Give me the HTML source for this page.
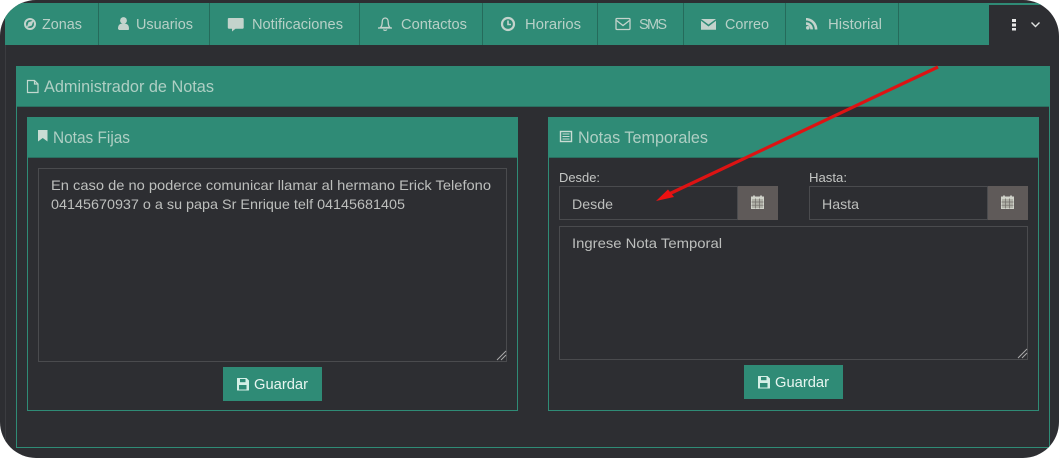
<!DOCTYPE html>
<html><head><meta charset="utf-8"><style>
html,body{margin:0;padding:0;background:#fff;width:1059px;height:458px;overflow:hidden}
svg{display:block}
text{font-family:"Liberation Sans",sans-serif}
.n{font-size:14.5px;fill:#b7d0c7}
.h{font-size:16.5px;fill:#afcfc4}
.l{font-size:13px;fill:#c4c6c4}
.t{font-size:14px;fill:#bdbfbd}
.g{font-size:14.5px;fill:#e8f5f0}
</style></head><body>
<svg width="1059" height="458" viewBox="0 0 1059 458" xmlns="http://www.w3.org/2000/svg">
<defs><clipPath id="c"><rect width="1059" height="458" rx="36" ry="36"/></clipPath></defs>
<rect width="1059" height="458" fill="#fff"/>
<g clip-path="url(#c)">
<rect width="1059" height="458" fill="#2d2e32"/>
<rect x="5" y="3" width="1054" height="2" fill="#2f8b76"/>
<rect x="5" y="3" width="984" height="42" fill="#2f8b76"/>
<rect x="5" y="45" width="1" height="413" fill="#3b3c40"/>
<g fill="#256b5b">
<rect x="98" y="3" width="1" height="42"/><rect x="209" y="3" width="1" height="42"/><rect x="359" y="3" width="1" height="42"/><rect x="482" y="3" width="1" height="42"/><rect x="597" y="3" width="1" height="42"/><rect x="683" y="3" width="1" height="42"/><rect x="785" y="3" width="1" height="42"/><rect x="898" y="3" width="1" height="42"/>
</g>
<!-- nav text -->
<text class="n" x="42" y="29" textLength="40" lengthAdjust="spacingAndGlyphs">Zonas</text>
<text class="n" x="136" y="29" textLength="57" lengthAdjust="spacingAndGlyphs">Usuarios</text>
<text class="n" x="252" y="29" textLength="91" lengthAdjust="spacingAndGlyphs">Notificaciones</text>
<text class="n" x="401" y="29" textLength="66" lengthAdjust="spacingAndGlyphs">Contactos</text>
<text class="n" x="525" y="29" textLength="56" lengthAdjust="spacingAndGlyphs">Horarios</text>
<text class="n" x="639" y="29" style="font-size:14.5px" textLength="28" lengthAdjust="spacing">SMS</text>
<text class="n" x="725" y="29" textLength="44" lengthAdjust="spacingAndGlyphs">Correo</text>
<text class="n" x="828" y="29" textLength="54" lengthAdjust="spacingAndGlyphs">Historial</text>
<!-- nav icons -->
<g fill="#c3d3cc" stroke="none">
<circle cx="30" cy="24" r="5" fill="none" stroke="#c3d3cc" stroke-width="2"/><path d="M33.500 20.500l-5 1.800-1.700 5 5-1.800z"/>
<circle cx="123.500" cy="20.500" r="3.400"/><path d="M118 29c0-4 1.500-5.500 5.500-5.500s5.500 1.500 5.500 5.500c0 .8-.6 1-1 1h-9c-.4 0-.5-.3-.5-1z"/>
<path d="M229 18h13.500c.8 0 1.200.4 1.200 1.200v8.300c0 .8-.4 1.200-1.200 1.200h-7l-3.500 2.800v-2.800h-3c-.8 0-1.200-.4-1.200-1.200v-8.300c0-.8.400-1.200 1.200-1.200z"/>
<path d="M701 19h15l-7.500 5.500z M701 20.800v9h15v-9l-7.500 5.700z"/>
<path d="M806 22.200v2.700c2.500 0 4.300 1.800 4.300 4.500h2.700c0-4-3-7.200-7-7.200z M806 18v2.500c5 0 8.800 4 8.800 9h2.600c0-6.500-5-11.500-11.400-11.500z"/><circle cx="807.800" cy="27.800" r="1.800"/>
</g>
<g fill="none" stroke="#c3d3cc">
<path d="M380.500 27.500c1.500-1.500 1.700-3 1.700-5.500 0-2.500 1.300-4 3-4s3 1.500 3 4c0 2.500.2 4 1.700 5.500z" stroke-width="1.300"/><path d="M378 28h14" stroke-width="1.300"/><path d="M383.500 29.500c.5 1.200 2.800 1.200 3.400 0" stroke-width="1.200"/>
<circle cx="508" cy="24" r="6" stroke-width="2.200"/><path d="M508 20.500v4h3" stroke-width="1.600"/>
<rect x="616" y="18.500" width="14" height="11" rx="1" stroke-width="1.300"/><path d="M616.500 20.500l6.500 5 6.500-5" stroke-width="1.300"/>
</g>
<!-- right nav -->
<g fill="#e8e8e8"><rect x="1012" y="19" width="4" height="3"/><rect x="1012" y="23.500" width="4" height="3"/><rect x="1012" y="28" width="4" height="2.500"/></g>
<path d="M1031.500 22.500l4 4 4-4" fill="none" stroke="#dfe1e0" stroke-width="1.400"/>
<!-- main panel -->
<rect x="16.500" y="66.500" width="1033" height="381" fill="none" stroke="#2f8b76"/>
<rect x="16" y="66" width="1034" height="40" fill="#2f8b76"/>
<rect x="17" y="106" width="1032" height="1" fill="#2a6f60"/>
<text class="h" x="44" y="92" textLength="170" lengthAdjust="spacingAndGlyphs">Administrador de Notas</text>
<path d="M27.500 80.500h7l3.500 3.500v8.500h-10.500z M34.500 80.500v3.500h3.500" fill="none" stroke="#c3d9d0" stroke-width="1.200"/>
<!-- left sub panel -->
<rect x="27.500" y="117.500" width="490" height="293" fill="none" stroke="#2f8b76"/>
<rect x="27" y="117" width="491" height="40" fill="#2f8b76"/>
<rect x="28" y="157" width="489" height="1" fill="#2a6f60"/>
<text class="h" x="53" y="143" textLength="77" lengthAdjust="spacingAndGlyphs">Notas Fijas</text>
<path d="M38 130h9.500v11.500l-4.750-3.500-4.750 3.500z" fill="#c9dcd4"/>
<rect x="38.500" y="168.500" width="468" height="193" fill="none" stroke="#4a4b4e"/>
<text class="t" x="51" y="190" textLength="440" lengthAdjust="spacingAndGlyphs">En caso de no poderce comunicar llamar al hermano Erick Telefono</text>
<text class="t" x="51" y="209" textLength="354" lengthAdjust="spacingAndGlyphs">04145670937 o a su papa Sr Enrique telf 04145681405</text>
<path d="M497 360l9-9M501 360l5-5" stroke="#aaa" stroke-width="1" fill="none"/>
<rect x="223" y="367" width="99" height="34" fill="#2f8b76"/>
<text class="g" x="254" y="389" textLength="54" lengthAdjust="spacingAndGlyphs">Guardar</text>
<g><path d="M237.500 378h9l2.500 2.500v9.500c0 .4-.2.500-.5.500h-11c-.4 0-.5-.2-.5-.5v-11.500c0-.4.200-.5.500-.5z" fill="#d4efe6"/><rect x="240" y="379" width="5.500" height="3.200" fill="#2f8b76"/><rect x="239" y="385" width="7.500" height="4.500" fill="#2f8b76"/></g>
<!-- right sub panel -->
<rect x="548.500" y="117.500" width="490" height="293" fill="none" stroke="#2f8b76"/>
<rect x="548" y="117" width="491" height="40" fill="#2f8b76"/>
<rect x="549" y="157" width="489" height="1" fill="#2a6f60"/>
<text class="h" x="578" y="143" textLength="130" lengthAdjust="spacingAndGlyphs">Notas Temporales</text>
<rect x="560.500" y="131.500" width="11" height="10" fill="#2f8b76" stroke="#c9dcd4" stroke-width="1.400"/>
<path d="M562.500 134h7M562.500 136.500h7M562.500 139h7" stroke="#c9dcd4" stroke-width="1.100"/>
<text class="l" x="559" y="182" textLength="41" lengthAdjust="spacingAndGlyphs">Desde:</text>
<text class="l" x="809" y="182" textLength="38" lengthAdjust="spacingAndGlyphs">Hasta:</text>
<rect x="559.500" y="186.500" width="178" height="33" fill="none" stroke="#4a4b4e"/>
<rect x="809.500" y="186.500" width="178" height="33" fill="none" stroke="#4a4b4e"/>
<rect x="738" y="186" width="40" height="34" fill="#5f5a59"/>
<rect x="988" y="186" width="40" height="34" fill="#5f5a59"/>
<text class="t" x="572" y="209" textLength="41" lengthAdjust="spacingAndGlyphs">Desde</text>
<text class="t" x="822" y="209" textLength="37" lengthAdjust="spacingAndGlyphs">Hasta</text>
<g fill="none" stroke="#d0d3ca" stroke-width="1">
<rect x="751.500" y="198.500" width="12" height="10" fill="#b0b1a8"/><path d="M751.500 198.500v-1.500h12v1.500" fill="#d0d3ca"/><path d="M755.500 198.500v10M759.500 198.500v10M751.500 202h12M751.500 205.200h12" stroke="#6f6c68" stroke-width=".7"/>
<path d="M754 195.500v2.500M761 195.500v2.500" stroke-width="1.800"/>
<rect x="1001.500" y="198.500" width="12" height="10" fill="#b0b1a8"/><path d="M1001.500 198.500v-1.500h12v1.500" fill="#d0d3ca"/><path d="M1005.500 198.500v10M1009.500 198.500v10M1001.500 202h12M1001.500 205.200h12" stroke="#6f6c68" stroke-width=".7"/>
<path d="M1004 195.500v2.500M1011 195.500v2.500" stroke-width="1.800"/>
</g>
<rect x="559.500" y="226.500" width="468" height="133" fill="none" stroke="#4a4b4e"/>
<text class="t" x="572" y="248" textLength="150" lengthAdjust="spacingAndGlyphs">Ingrese Nota Temporal</text>
<path d="M1018 358l9-9M1022 358l5-5" stroke="#aaa" stroke-width="1" fill="none"/>
<rect x="744" y="365" width="99" height="34" fill="#2f8b76"/>
<text class="g" x="775" y="387" textLength="54" lengthAdjust="spacingAndGlyphs">Guardar</text>
<g transform="translate(521 -2)"><path d="M237.500 378h9l2.500 2.500v9.500c0 .4-.2.500-.5.500h-11c-.4 0-.5-.2-.5-.5v-11.500c0-.4.200-.5.500-.5z" fill="#d4efe6"/><rect x="240" y="379" width="5.500" height="3.200" fill="#2f8b76"/><rect x="239" y="385" width="7.500" height="4.500" fill="#2f8b76"/></g>
<!-- arrow -->
<path d="M938 67L668 194.500" stroke="#dd1313" stroke-width="3.200" fill="none"/>
<path d="M656 201L668 189.500L674 197z" fill="#ee1111"/>
</g>
</svg>
</body></html>
